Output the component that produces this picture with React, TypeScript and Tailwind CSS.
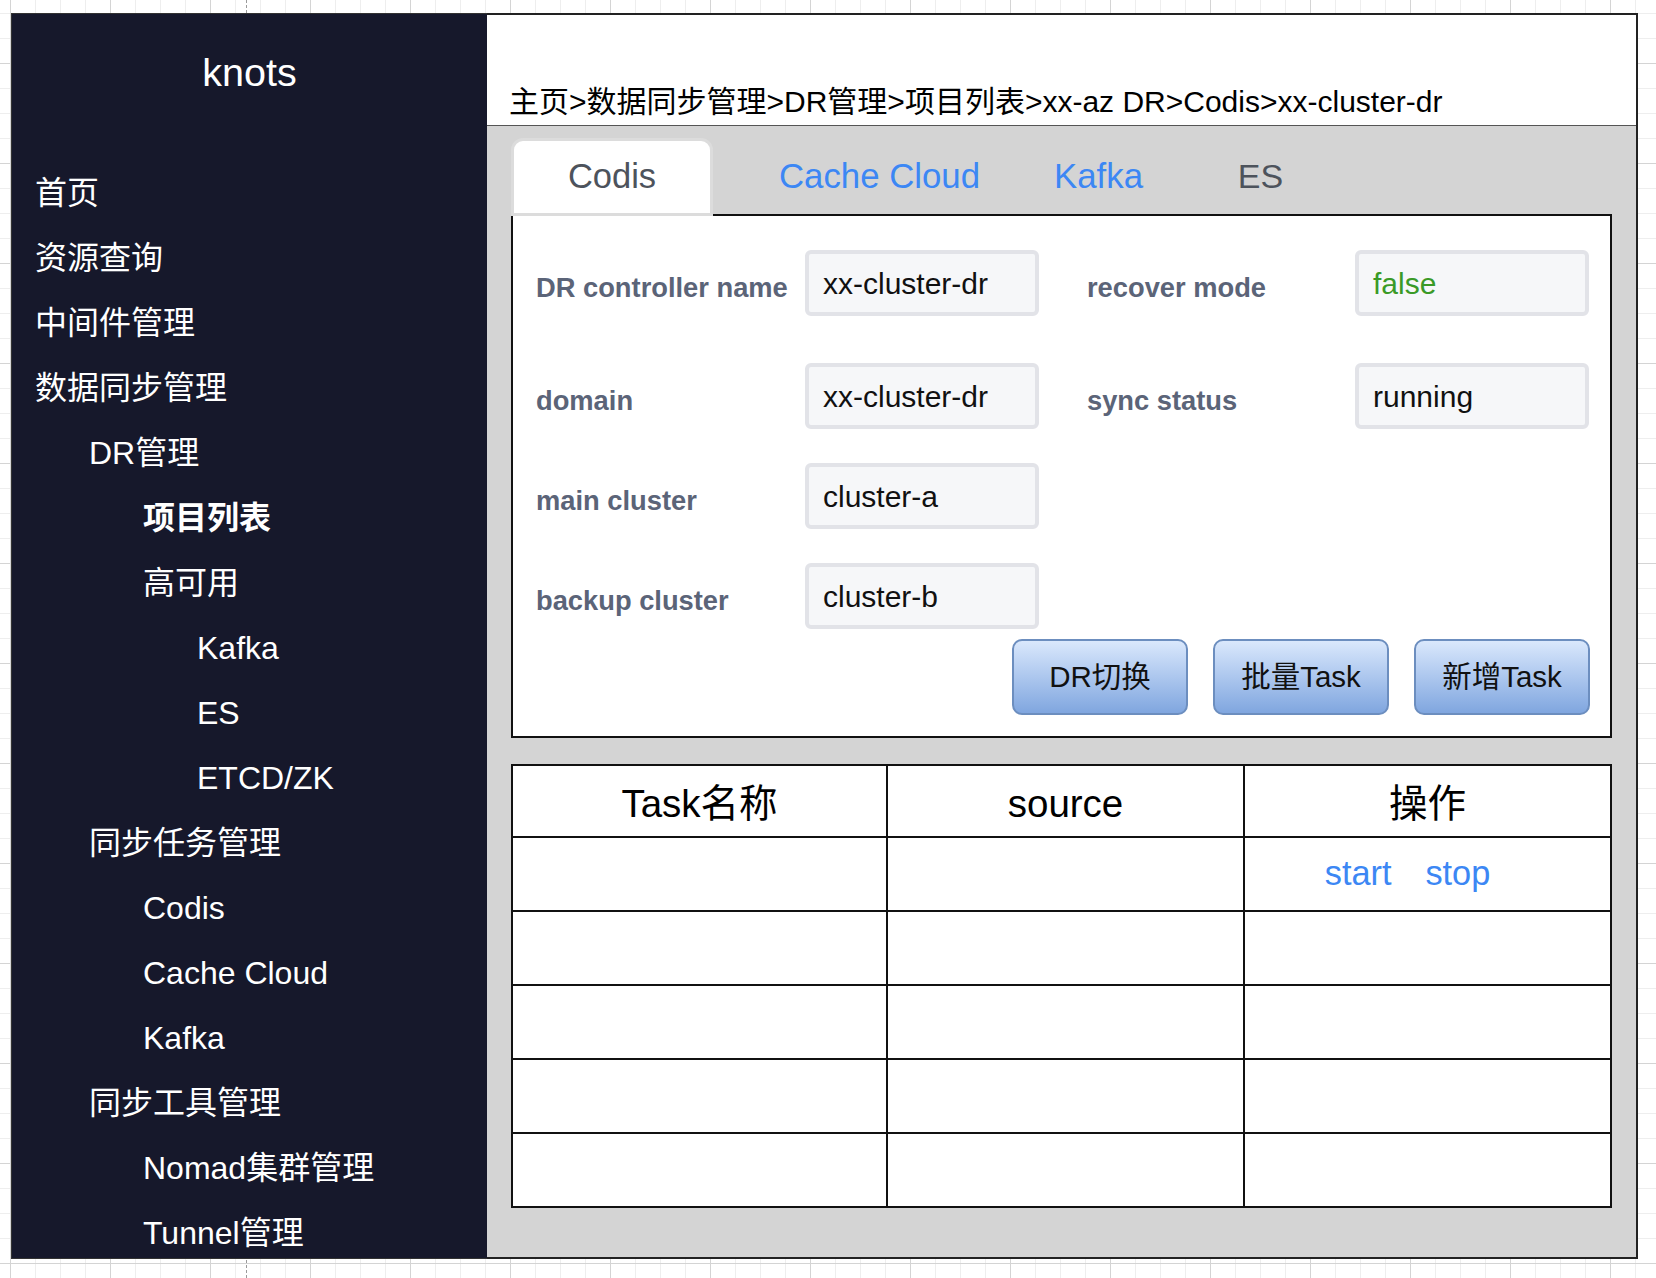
const FONT = "font-['Liberation_Sans','Noto_Sans_CJK_SC',sans-serif]";

type Item = { label: string; level: 0 | 1 | 2 | 3; bold?: boolean };

const items: Item[] = [
  { label: "首页", level: 0 },
  { label: "资源查询", level: 0 },
  { label: "中间件管理", level: 0 },
  { label: "数据同步管理", level: 0 },
  { label: "DR管理", level: 1 },
  { label: "项目列表", level: 2, bold: true },
  { label: "高可用", level: 2 },
  { label: "Kafka", level: 3 },
  { label: "ES", level: 3 },
  { label: "ETCD/ZK", level: 3 },
  { label: "同步任务管理", level: 1 },
  { label: "Codis", level: 2 },
  { label: "Cache Cloud", level: 2 },
  { label: "Kafka", level: 2 },
  { label: "同步工具管理", level: 1 },
  { label: "Nomad集群管理", level: 2 },
  { label: "Tunnel管理", level: 2 },
];

const indent: Record<number, string> = {
  0: "pl-[23px]",
  1: "pl-[77px]",
  2: "pl-[131px]",
  3: "pl-[185px]",
};

function Box({ children, green }: { children: React.ReactNode; green?: boolean }) {
  return (
    <div
      className={
        "w-[234px] h-[66px] shrink-0 border-4 border-[#e2e3e8] bg-[#f6f7f9] rounded-[6px] pl-[14px] flex items-center text-[30px] " +
        (green ? "text-[#3a9a27]" : "text-[#111]")
      }
    >
      {children}
    </div>
  );
}

function Label({ children, w }: { children: React.ReactNode; w: string }) {
  return (
    <div className={w + " shrink-0 pt-[10px] font-bold text-[27.3px] text-[#5b6478] whitespace-nowrap"}>
      {children}
    </div>
  );
}

function Btn({ children }: { children: React.ReactNode }) {
  return (
    <div className="w-[176px] h-[76px] rounded-[10px] border-2 border-[#6c8ebf] bg-linear-to-b from-[#dae8fc] to-[#80a6df] flex items-center justify-center text-[29.5px] text-[#111]">
      {children}
    </div>
  );
}

function Row({ children, header }: { children: React.ReactNode; header?: boolean }) {
  return (
    <div className={header ? "flex h-[70px]" : "flex h-[74px] border-t-2 border-[#111]"}>{children}</div>
  );
}

export default function App() {
  return (
    <div
      className={
        FONT +
        " relative w-[1656px] h-[1278px] bg-white pl-[11px] pt-[13px] [background-image:linear-gradient(to_right,#d4d4d4_1px,transparent_1px),linear-gradient(to_bottom,#d4d4d4_1px,transparent_1px),linear-gradient(to_right,#eeeeee_1px,transparent_1px),linear-gradient(to_bottom,#eeeeee_1px,transparent_1px)] [background-size:100px_100px,100px_100px,25px_25px,25px_25px] [background-position:10px_0px,0px_63px,10px_0px,0px_13px]"
      }
    >
      <div className="absolute left-[246px] top-0 h-[13px] border-l border-dashed border-[#9a9a9a]" />
      <div className="absolute left-[246px] top-[1260px] h-[18px] border-l border-dashed border-[#9a9a9a]" />

      <div className="flex w-[1627px] h-[1246px]">
        {/* Sidebar */}
        <aside className="w-[476px] shrink-0 bg-[#16182b] border-l border-y border-[#333] overflow-hidden text-white">
          <div className="mt-[38px] text-center text-[39.5px] leading-[40px]">knots</div>
          <div className="mt-[69px]">
            {items.map((it, i) => (
              <div
                key={i}
                className={
                  indent[it.level] +
                  " h-[65px] leading-[65px] text-[32px] whitespace-nowrap" +
                  (it.bold ? " font-bold" : "")
                }
              >
                {it.label}
              </div>
            ))}
          </div>
        </aside>

        {/* Main */}
        <div className="flex flex-col flex-1 border-t-2 border-r-2 border-b-2 border-[#222]">
          <header className="h-[111px] shrink-0 bg-white border-b border-[#555] pl-[22px] pt-[72px] text-[30px] leading-[30px] text-black whitespace-nowrap">
            主页&gt;数据同步管理&gt;DR管理&gt;项目列表&gt;xx-az DR&gt;Codis&gt;xx-cluster-dr
          </header>

          <div className="flex-1 bg-[#d4d4d4] px-[24px] pt-[12px]">
            {/* Tabs */}
            <div className="flex h-[76px]">
              <div className="relative z-10 w-[202px] h-[78px] shrink-0 bg-white border-[3px] border-[#dcdcdc] rounded-t-[12px] flex items-center justify-center text-[34.5px] text-[#4d535c]">
                Codis
              </div>
              <div className="w-[333px] shrink-0 flex items-center justify-center text-[34.8px] text-[#3c87f4]">
                Cache Cloud
              </div>
              <div className="w-[105px] shrink-0 flex items-center justify-center text-[34.8px] text-[#3c87f4]">
                Kafka
              </div>
              <div className="w-[219px] shrink-0 flex items-center justify-center text-[34px] text-[#4d535c]">
                ES
              </div>
            </div>

            {/* Form panel */}
            <div className="h-[524px] border-2 border-[#111] bg-white pl-[23px] pt-[34px] flex flex-col">
              <div className="flex items-center h-[66px]">
                <Label w="w-[269px]">DR controller name</Label>
                <Box>xx-cluster-dr</Box>
                <div className="w-[48px] shrink-0" />
                <Label w="w-[268px]">recover mode</Label>
                <Box green>false</Box>
              </div>
              <div className="flex items-center h-[66px] mt-[47px]">
                <Label w="w-[269px]">domain</Label>
                <Box>xx-cluster-dr</Box>
                <div className="w-[48px] shrink-0" />
                <Label w="w-[268px]">sync status</Label>
                <Box>running</Box>
              </div>
              <div className="flex items-center h-[66px] mt-[34px]">
                <Label w="w-[269px]">main cluster</Label>
                <Box>cluster-a</Box>
              </div>
              <div className="flex items-center h-[66px] mt-[34px]">
                <Label w="w-[269px]">backup cluster</Label>
                <Box>cluster-b</Box>
              </div>
              <div className="flex justify-end gap-[25px] pr-[20px] mt-[10px]">
                <Btn>DR切换</Btn>
                <Btn>批量Task</Btn>
                <Btn>新增Task</Btn>
              </div>
            </div>

            {/* Table */}
            <div className="mt-[26px] border-2 border-[#111] bg-white">
              <Row header>
                <div className="w-[373px] pt-[5px] flex items-center justify-center text-[38.5px] text-black">Task名称</div>
                <div className="w-[357px] pt-[5px] border-l-2 border-[#111] flex items-center justify-center text-[38.5px] text-black">source</div>
                <div className="w-[367px] pt-[5px] border-l-2 border-[#111] flex items-center justify-center text-[38.5px] text-black">操作</div>
              </Row>
              {[0, 1, 2, 3, 4].map((r) => (
                <Row key={r}>
                  <div className="w-[373px]" />
                  <div className="w-[357px] border-l-2 border-[#111]" />
                  <div className="w-[367px] border-l-2 border-[#111] flex items-center justify-center gap-[34px] pr-[40px] text-[34.3px] text-[#3c87f4]">
                    {r === 0 ? (
                      <>
                        <span>start</span>
                        <span>stop</span>
                      </>
                    ) : null}
                  </div>
                </Row>
              ))}
            </div>
          </div>
        </div>
      </div>
    </div>
  );
}
